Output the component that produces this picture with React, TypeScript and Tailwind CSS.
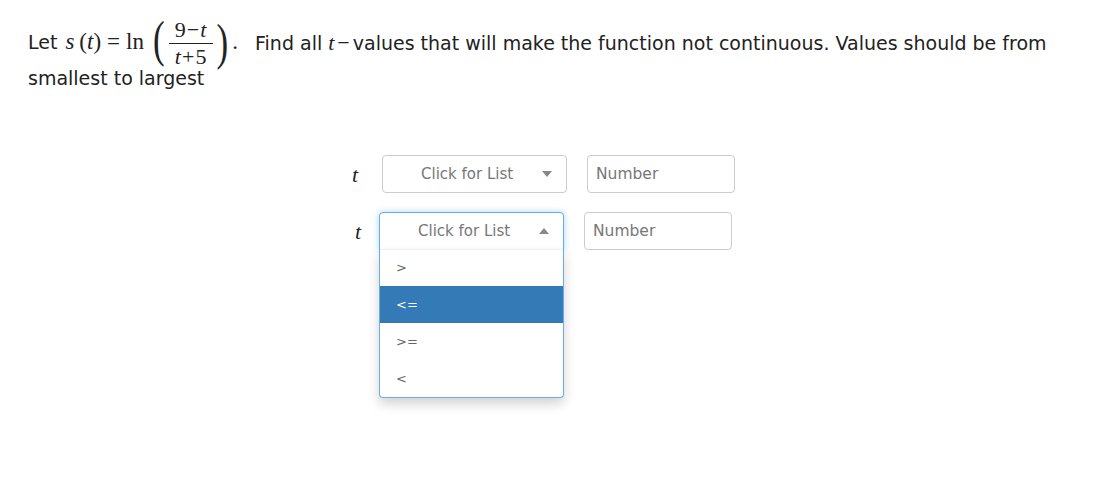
import React from 'react';

const serif = "font-['Liberation_Serif','DejaVu_Serif',serif]";
const sans = "font-['DejaVu_Sans','Verdana',sans-serif]";

function Caret({ up }: { up?: boolean }) {
  return (
    <svg width="10" height="6" viewBox="0 0 10 6" className="shrink-0">
      {up ? <path d="M0 6 L5 0 L10 6 Z" fill="#888" /> : <path d="M0 0 L10 0 L5 6 Z" fill="#888" />}
    </svg>
  );
}

function BigParen({ ch }: { ch: string }) {
  return (
    <span className="inline-block text-[35px] leading-none scale-y-[1.45] origin-center">{ch}</span>
  );
}

function MathExpr() {
  return (
    <span className={`${serif} inline-flex items-center text-[23px] text-[#222] ml-[8px]`}>
      <i>s</i>
      <span className="ml-[5px]">(</span>
      <i>t</i>
      <span>)</span>
      <span className="mx-[6px]">=</span>
      <span>ln</span>
      <span className="ml-[9px]">
        <BigParen ch="(" />
      </span>
      <span className="inline-flex flex-col items-center text-[22px] leading-[18px] mx-[4px]">
        <span className="px-[2px] border-b border-[#222] pt-[2px] pb-[4px] w-[44px] text-center">
          9<span className="mx-[1px]">−</span>
          <i>t</i>
        </span>
        <span className="px-[2px] pt-[4px]">
          <i>t</i>
          <span className="mx-[1px]">+</span>5
        </span>
      </span>
      <BigParen ch=")" />
      <span className="ml-[4px]">.</span>
    </span>
  );
}

function SelectBox({ open }: { open?: boolean }) {
  return (
    <div className="relative">
      <div
        className={`w-[185px] h-[38px] rounded-[4px] border bg-white flex items-center pl-[38px] pr-[14px] ${
          open
            ? 'border-[#66afe9] shadow-[0_0_6px_rgba(102,175,233,0.55)] rounded-b-none'
            : 'border-[#cccccc]'
        }`}
      >
        <span className={`${sans} flex-1 text-[15px] text-[#777]`}>Click for List</span>
        <Caret up={open} />
      </div>
      {open && (
        <div className="absolute left-0 top-[37px] w-[185px] bg-white border border-[#66afe9] border-t-0 rounded-b-[4px] shadow-[0_6px_12px_rgba(0,0,0,0.175)] z-10">
          <div className="h-[1px] bg-[#f0f0f0]" />
          {['>', '<=', '>=', '<'].map((o, i) => (
            <div
              key={o}
              className={`${sans} flex items-center pl-[16px] text-[13px] ${
                i === 1 ? 'bg-[#337ab7] text-white' : 'text-[#666]'
              } ${i === 0 ? 'h-[36px]' : 'h-[37px]'}`}
            >
              {o}
            </div>
          ))}
        </div>
      )}
    </div>
  );
}

function NumberInput() {
  return (
    <div className="w-[148px] h-[38px] rounded-[4px] border border-[#cccccc] bg-white flex items-center pl-[8px] pt-[2px]">
      <span className={`${sans} text-[15.5px] text-[#777]`}>Number</span>
    </div>
  );
}

export default function App() {
  return (
    <div className="w-[1106px] h-[485px] bg-white relative">
      <div className={`${sans} text-[19px] text-[#222] pl-[28px] pt-[14px] pr-[40px]`}>
        <div className="flex items-center h-[56px] whitespace-nowrap">
          <span>Let</span>
          <MathExpr />
          <span className="ml-[17px]">
            Find all <i className={`${serif} text-[22px]`}>t</i>
            <span className={`${serif} text-[22px] mx-[3px]`}>−</span>values that will make the function not continuous. Values should be from
          </span>
        </div>
        <div className="-mt-[5px] h-[26px] leading-[26px]">smallest to largest</div>
      </div>

      <div className="flex flex-col gap-[19px] mt-[64px]">
        <div className="flex items-center pl-[352px]">
          <i className={`${serif} text-[22px] text-[#222] w-[30px]`}>t</i>
          <SelectBox />
          <div className="w-[20px]" />
          <NumberInput />
        </div>
        <div className="flex items-center pl-[355px]">
          <i className={`${serif} text-[22px] text-[#222] w-[24px]`}>t</i>
          <SelectBox open />
          <div className="w-[20px]" />
          <NumberInput />
        </div>
      </div>
    </div>
  );
}
